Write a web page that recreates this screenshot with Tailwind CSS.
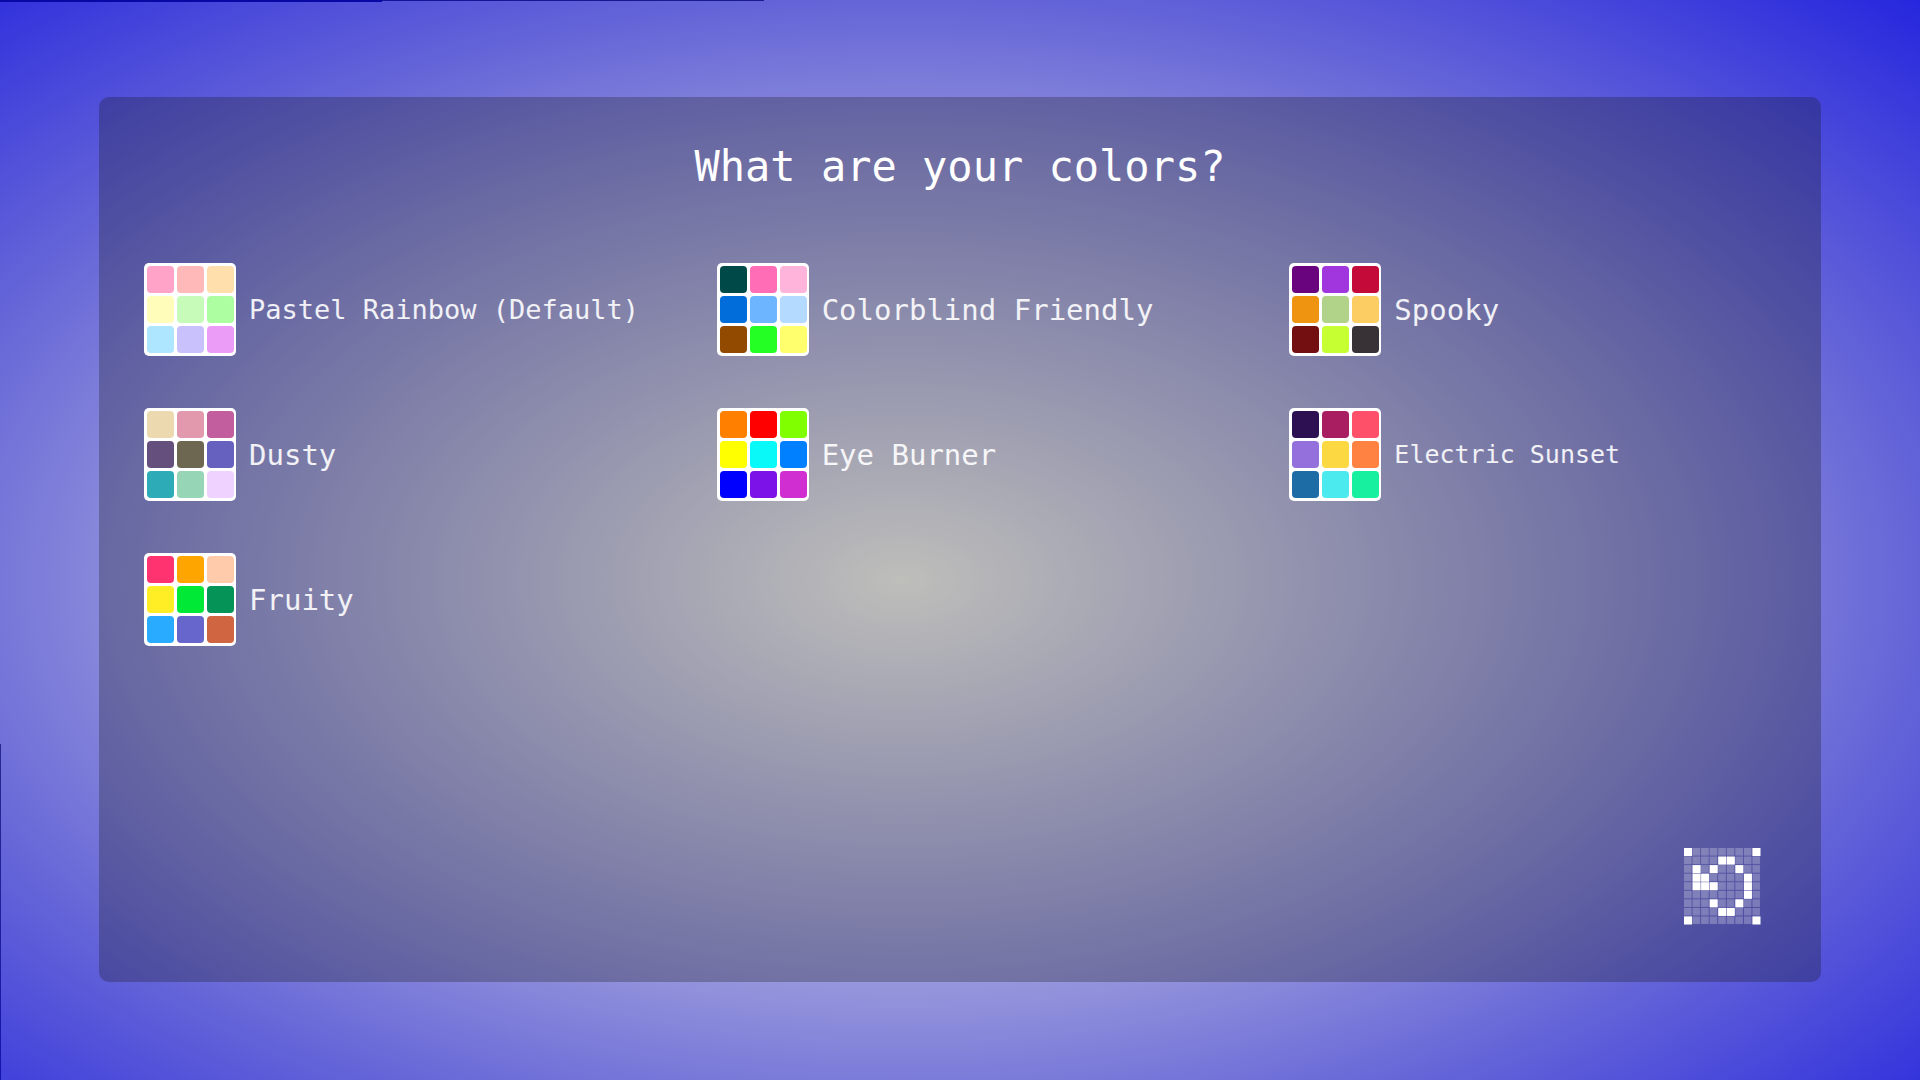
<!DOCTYPE html>
<html lang="en">
<head>
    <meta charset="UTF-8">
    <meta name="viewport" content="width=device-width, initial-scale=1.0">
    <title>What are your colors?</title>

    <!-- Tailwind CSS -->
    <script src="https://cdn.jsdelivr.net/npm/@tailwindcss/browser@4"></script>

    <style>
        body {
            font-family: 'DejaVu Sans Mono', monospace;
            background: radial-gradient(ellipse farthest-corner at 47% 53.7%, #fffffa 0%, #cbcbec 24%, #9090db 52%, #6666d8 70%, #2626de 100%);
        }
    </style>
</head>
<body class="relative min-h-screen flex px-[99px] pt-[97px] pb-[98px] text-white">

    <!-- Screen edge lines -->
    <div class="absolute top-0 left-0 h-px w-[764px] bg-linear-to-r from-[#0808a4] to-[#1b1b8c]"></div>
    <div class="absolute top-0 left-0 h-[2px] w-[382px] bg-[#0808a4]"></div>
    <div class="absolute bottom-0 left-0 w-px h-[336px] bg-linear-to-b from-[#28288c] to-[#1414aa]"></div>

    <main class="flex-1 flex flex-col rounded-[10px] bg-[#161616]/28 px-[45px] pt-[43px] pb-[57px]">
        <h1 class="text-center text-[42px] leading-[54px]">What are your colors?</h1>

        <div id="palettes" class="mt-[69px] grid grid-cols-3 gap-x-[86px] gap-y-[52px]"></div>

        <div class="mt-auto flex justify-end pr-[15px]">
            <button type="button" aria-label="Back" class="size-[77px] cursor-pointer">
                <svg class="size-full" viewBox="0 0 153 153">
                    <defs>
                        <pattern id="cells" width="17" height="17" patternUnits="userSpaceOnUse">
                            <rect width="15" height="15" fill="#fff" fill-opacity=".26" />
                        </pattern>
                    </defs>
                    <rect width="153" height="153" fill="url(#cells)" />
                    <g id="arrow" fill="#fff"></g>
                </svg>
            </button>
        </div>
    </main>

    <script>
        const palettes = [
            { name: 'Pastel Rainbow (Default)', size: 'text-[27px]', colors: ['#ffa3c8', '#ffb9b9', '#ffe0ac', '#fffdb9', '#c6fbb9', '#adfea0', '#aee5ff', '#c9c1fc', '#eb9cf7'] },
            { name: 'Colorblind Friendly', size: 'text-[29px]', colors: ['#004949', '#ff6db6', '#ffb5db', '#006ddb', '#6db6ff', '#b5daff', '#924900', '#24ff24', '#ffff6d'] },
            { name: 'Spooky', size: 'text-[29px]', colors: ['#69047e', '#a136de', '#c40a38', '#ee9411', '#b1d289', '#fccd63', '#730f10', '#c6ff32', '#383237'] },
            { name: 'Dusty', size: 'text-[29px]', colors: ['#ecd9b0', '#e299ae', '#c25d9e', '#644f7d', '#6d6650', '#6660bf', '#2dabb6', '#97d5b7', '#efd2ff'] },
            { name: 'Eye Burner', size: 'text-[29px]', colors: ['#ff8000', '#ff0000', '#80ff00', '#ffff00', '#09f9f9', '#007fff', '#0000ff', '#7d12e8', '#d12ed1'] },
            { name: 'Electric Sunset', size: 'text-[25px]', colors: ['#2c1052', '#a91e61', '#ff5069', '#9370db', '#fcd843', '#ff8243', '#1d6ca6', '#4beaee', '#16f09f'] },
            { name: 'Fruity', size: 'text-[29px]', colors: ['#ff336f', '#ffa500', '#ffcbab', '#ffed26', '#00e936', '#059358', '#29abff', '#6666cc', '#d06542'] },
        ];

        const list = document.getElementById('palettes');

        palettes.forEach(({ name, size, colors }) => {
            const cells = colors
                .map(color => `<span class="size-[27px] rounded-[4px]" style="background:${color}"></span>`)
                .join('');
            list.insertAdjacentHTML('beforeend', `
                <button type="button" class="flex items-center gap-[13px] text-left cursor-pointer">
                    <span class="shrink-0 grid grid-cols-[repeat(3,27px)] gap-[3px] py-[3px] pl-[3px] pr-[2px] rounded-[5px] bg-white">${cells}</span>
                    <span class="${size} leading-9 whitespace-nowrap text-white/90">${name}</span>
                </button>`);
        });

        // Lit cells of the back arrow, on a 9x9 grid
        const arrow = [
            '#.......#',
            '....##...',
            '.#.#..#..',
            '.##....#.',
            '.###...#.',
            '.......#.',
            '...#..#..',
            '....##...',
            '#.......#',
        ];

        document.getElementById('arrow').innerHTML = arrow
            .flatMap((row, y) => [...row].map((c, x) => c === '#' ? `<rect x="${x * 17}" y="${y * 17}" width="16" height="16" />` : ''))
            .join('');
    </script>
</body>
</html>
